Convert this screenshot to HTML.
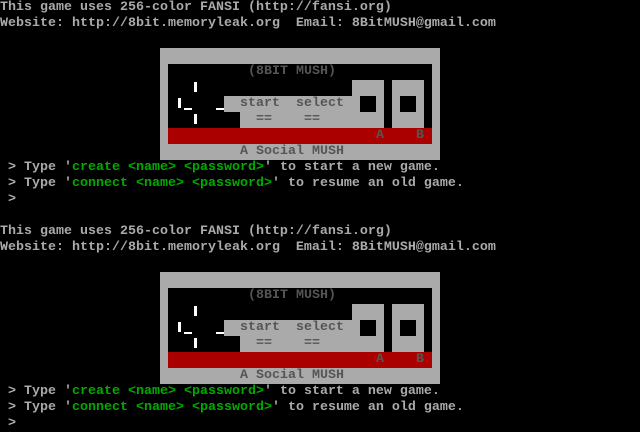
<!DOCTYPE html>
<html><head><meta charset="utf-8"><style>
html,body{margin:0;padding:0;background:#000;width:640px;height:432px;overflow:hidden}
body{position:relative;font-family:"Liberation Mono","DejaVu Sans Mono",monospace;font-size:13.33px;font-weight:bold;line-height:16px;color:#aaa}
.b{position:absolute;left:0;width:640px;height:224px}
.r{position:absolute;white-space:pre;height:16px}
.g{color:#00aa00}
.bx{position:absolute}
.d{color:#555}
</style></head><body>
<div class="b" style="top:0">
<div class="r" style="left:0;top:0">This game uses 256-color FANSI (http://fansi.org)</div>
<div class="r" style="left:0;top:16px">Website: http://8bit.memoryleak.org  Email: 8BitMUSH@gmail.com</div>
<div class="bx" style="left:160px;top:48px;width:280px;height:112px;background:#aaa"></div>
<div class="bx" style="left:168px;top:64px;width:264px;height:64px;background:#000"></div>
<div class="r d" style="left:248px;top:64px">(8BIT MUSH)</div>
<div class="bx" style="left:352px;top:80px;width:32px;height:48px;background:#aaa"></div>
<div class="bx" style="left:392px;top:80px;width:32px;height:48px;background:#aaa"></div>
<div class="bx" style="left:360px;top:96px;width:16px;height:16px;background:#000"></div>
<div class="bx" style="left:400px;top:96px;width:16px;height:16px;background:#000"></div>
<div class="bx" style="left:224px;top:96px;width:128px;height:16px;background:#aaa"></div>
<div class="bx" style="left:240px;top:112px;width:112px;height:16px;background:#aaa"></div>
<div class="r d" style="left:240px;top:96px">start  select</div>
<div class="r d" style="left:256px;top:112px">==    ==</div>
<div class="bx" style="left:194px;top:82px;width:3px;height:10px;background:#fff"></div>
<div class="bx" style="left:194px;top:114px;width:3px;height:10px;background:#fff"></div>
<div class="bx" style="left:178px;top:98px;width:3px;height:10px;background:#fff"></div>
<div class="bx" style="left:184px;top:108px;width:8px;height:2px;background:#fff"></div>
<div class="bx" style="left:216px;top:108px;width:8px;height:2px;background:#fff"></div>
<div class="bx" style="left:168px;top:128px;width:264px;height:16px;background:#aa0000"></div>
<div class="r d" style="left:376px;top:128px">A    B</div>
<div class="r d" style="left:240px;top:144px">A Social MUSH</div>
<div class="r" style="left:0;top:160px"> &gt; Type '<span class="g">create &lt;name&gt; &lt;password&gt;</span>' to start a new game.</div>
<div class="r" style="left:0;top:176px"> &gt; Type '<span class="g">connect &lt;name&gt; &lt;password&gt;</span>' to resume an old game.</div>
<div class="r" style="left:0;top:192px"> &gt;</div>
</div>
<div class="b" style="top:224px">
<div class="r" style="left:0;top:0">This game uses 256-color FANSI (http://fansi.org)</div>
<div class="r" style="left:0;top:16px">Website: http://8bit.memoryleak.org  Email: 8BitMUSH@gmail.com</div>
<div class="bx" style="left:160px;top:48px;width:280px;height:112px;background:#aaa"></div>
<div class="bx" style="left:168px;top:64px;width:264px;height:64px;background:#000"></div>
<div class="r d" style="left:248px;top:64px">(8BIT MUSH)</div>
<div class="bx" style="left:352px;top:80px;width:32px;height:48px;background:#aaa"></div>
<div class="bx" style="left:392px;top:80px;width:32px;height:48px;background:#aaa"></div>
<div class="bx" style="left:360px;top:96px;width:16px;height:16px;background:#000"></div>
<div class="bx" style="left:400px;top:96px;width:16px;height:16px;background:#000"></div>
<div class="bx" style="left:224px;top:96px;width:128px;height:16px;background:#aaa"></div>
<div class="bx" style="left:240px;top:112px;width:112px;height:16px;background:#aaa"></div>
<div class="r d" style="left:240px;top:96px">start  select</div>
<div class="r d" style="left:256px;top:112px">==    ==</div>
<div class="bx" style="left:194px;top:82px;width:3px;height:10px;background:#fff"></div>
<div class="bx" style="left:194px;top:114px;width:3px;height:10px;background:#fff"></div>
<div class="bx" style="left:178px;top:98px;width:3px;height:10px;background:#fff"></div>
<div class="bx" style="left:184px;top:108px;width:8px;height:2px;background:#fff"></div>
<div class="bx" style="left:216px;top:108px;width:8px;height:2px;background:#fff"></div>
<div class="bx" style="left:168px;top:128px;width:264px;height:16px;background:#aa0000"></div>
<div class="r d" style="left:376px;top:128px">A    B</div>
<div class="r d" style="left:240px;top:144px">A Social MUSH</div>
<div class="r" style="left:0;top:160px"> &gt; Type '<span class="g">create &lt;name&gt; &lt;password&gt;</span>' to start a new game.</div>
<div class="r" style="left:0;top:176px"> &gt; Type '<span class="g">connect &lt;name&gt; &lt;password&gt;</span>' to resume an old game.</div>
<div class="r" style="left:0;top:192px"> &gt;</div>
</div>
</body></html>
